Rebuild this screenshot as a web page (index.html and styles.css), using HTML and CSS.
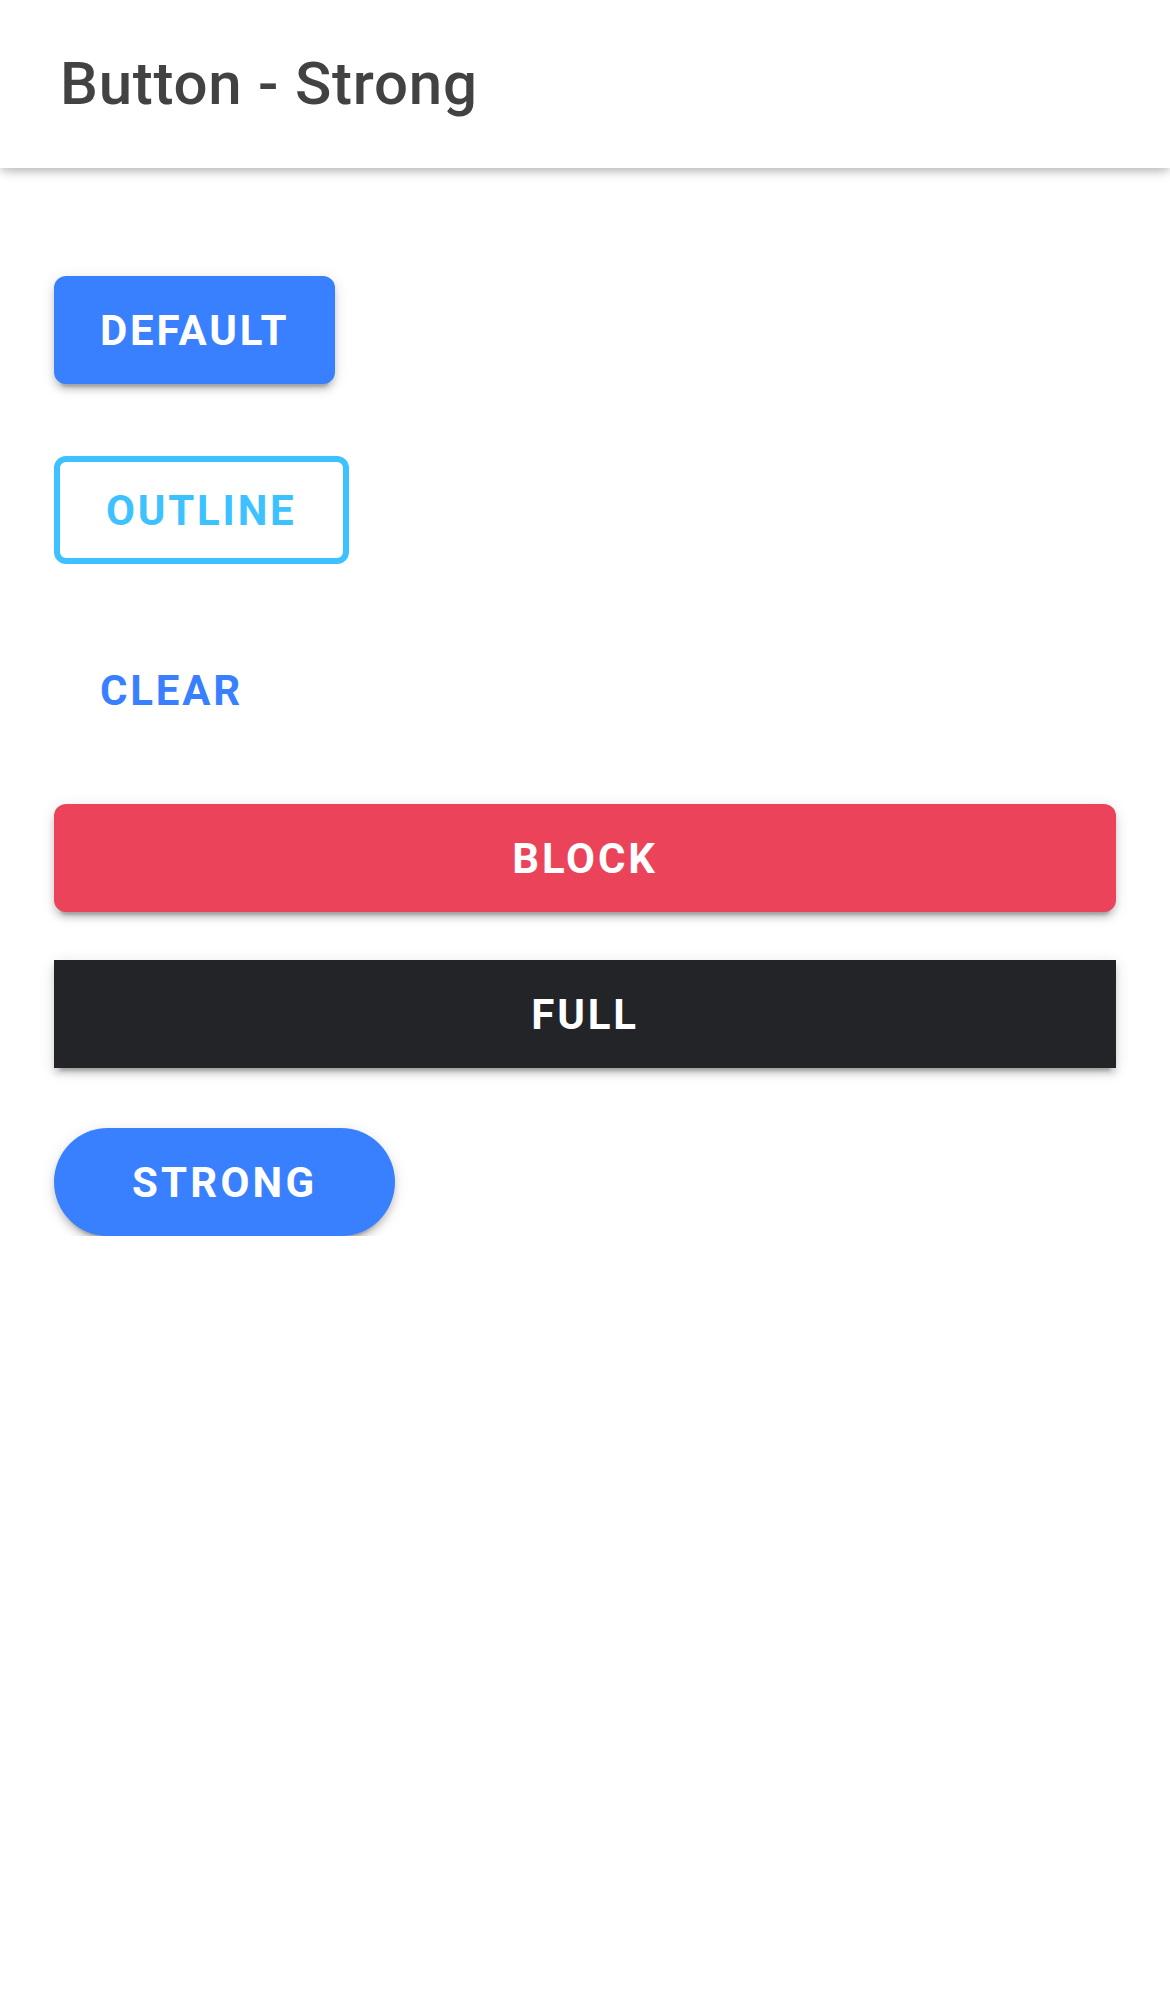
FILE: index.html
```html
<!DOCTYPE html>
<html lang="en">
<head>
<meta charset="utf-8">
<title>Button - Strong</title>
<link rel="stylesheet" href="styles.css">
</head>
<body>
<header class="toolbar">
  <h1 class="toolbar-title">Button - Strong</h1>
</header>
<main class="content">
  <button class="btn btn-solid btn-primary gap-first">Default</button>
  <button class="btn btn-outline gap-72">Outline</button>
  <button class="btn btn-clear gap-72">Clear</button>
  <button class="btn btn-solid btn-danger btn-block gap-60">Block</button>
  <button class="btn btn-solid btn-dark btn-full gap-48">Full</button>
  <button class="btn btn-solid btn-primary btn-round gap-60">Strong</button>
</main>
</body>
</html>
```

FILE: styles.css
```css
html, body {
  margin: 0;
  padding: 0;
  background: #ffffff;
  font-family: Roboto, "Noto Sans", "Liberation Sans", sans-serif;
}

.toolbar {
  position: relative;
  z-index: 2;
  height: 168px;
  display: flex;
  align-items: center;
  background: #ffffff;
  box-shadow: 0 6px 12px -3px rgba(0, 0, 0, 0.2),
              0 4px 6px 0 rgba(0, 0, 0, 0.10);
}

.toolbar-title {
  margin: 0;
  padding: 0 0 0 60px;
  font-size: 60px;
  font-weight: 500;
  letter-spacing: 0.0125em;
  color: #424242;
  line-height: 1;
}

.content {
  display: flex;
  flex-direction: column;
  align-items: flex-start;
  padding: 0 48px;
}

.btn {
  box-sizing: border-box;
  height: 108px;
  margin: 0 6px;
  padding: 2px 46px 0;
  border: 0;
  border-radius: 12px;
  font-family: Roboto, "Noto Sans", "Liberation Sans", sans-serif;
  font-size: 42px;
  font-weight: 700;
  letter-spacing: 2.8px;
  text-transform: uppercase;
  display: inline-flex;
  align-items: center;
  justify-content: center;
  background: transparent;
  line-height: 1;
}

.btn-solid {
  color: #ffffff;
  box-shadow: 0 9px 3px -6px rgba(0, 0, 0, 0.2),
              0 6px 6px 0 rgba(0, 0, 0, 0.14),
              0 3px 15px 0 rgba(0, 0, 0, 0.12);
}

.btn-primary { background: #3880ff; }
.btn-danger { background: #eb445a; }
.btn-dark { background: #222428; }

.btn-outline {
  border: 6px solid #3dc2ff;
  color: #3dc2ff;
  background: #ffffff;
}

.btn-clear {
  color: #3880ff;
}

.btn-block {
  align-self: stretch;
}

.btn-full {
  align-self: stretch;
  border-radius: 0;
}

.btn-round {
  border-radius: 54px;
  padding: 2px 78px 0;
  letter-spacing: 3.2px;
}

.gap-first { margin-top: 108px; }
.gap-72 { margin-top: 72px; }
.gap-60 { margin-top: 60px; }
.gap-48 { margin-top: 48px; }
```
